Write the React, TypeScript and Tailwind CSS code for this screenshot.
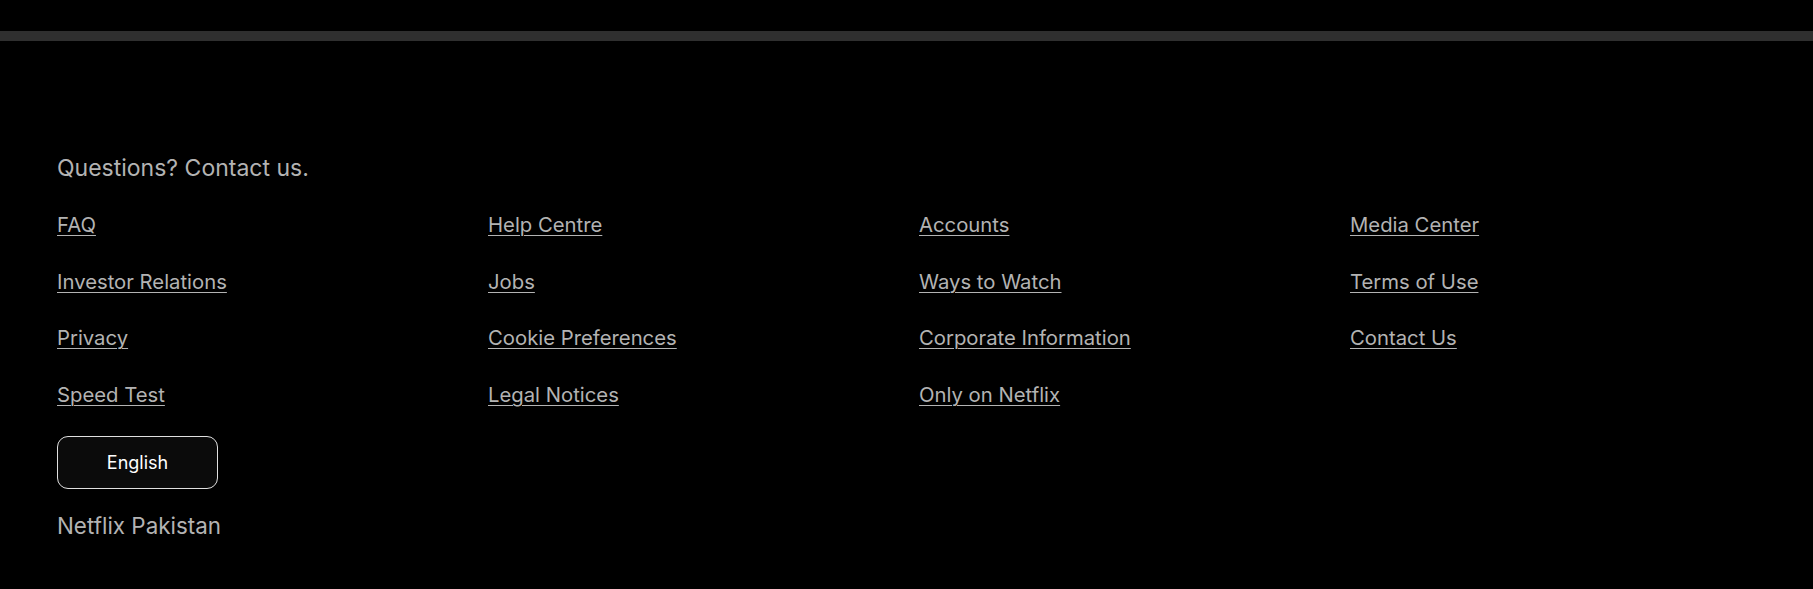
import React from 'react';

const links: string[] = [
  'FAQ',
  'Help Centre',
  'Accounts',
  'Media Center',
  'Investor Relations',
  'Jobs',
  'Ways to Watch',
  'Terms of Use',
  'Privacy',
  'Cookie Preferences',
  'Corporate Information',
  'Contact Us',
  'Speed Test',
  'Legal Notices',
  'Only on Netflix',
];

const App: React.FC = () => {
  return (
    <div className="min-h-screen w-full bg-black font-['Inter',sans-serif] text-[#b3b3b3]">
      {/* divider */}
      <div className="h-[31px]" />
      <div className="h-[10px] w-full bg-[#2f2f2f]" />

      {/* Footer */}
      <footer className="pl-[57px] pt-[112px] pb-[30px]">
        <p className="text-[23px] leading-[30px]">Questions? Contact us.</p>

        <ul className="mt-[30px] grid w-[1724px] grid-cols-4 gap-y-[32.67px]">
          {links.map((link) => (
            <li key={link} className="text-[20.3px] leading-[24px]">
              <a href="#" className="underline underline-offset-[3px] decoration-1">
                {link}
              </a>
            </li>
          ))}
        </ul>

        <button className="mt-[29px] flex h-[53px] w-[161px] items-center justify-center rounded-[11px] border border-[#e0e0e0] bg-[#0b0b0b] text-[18px] font-normal text-white">
          English
        </button>

        <p className="mt-[23px] text-[22.4px] leading-[28px]">Netflix Pakistan</p>
      </footer>
    </div>
  );
};

export default App;
